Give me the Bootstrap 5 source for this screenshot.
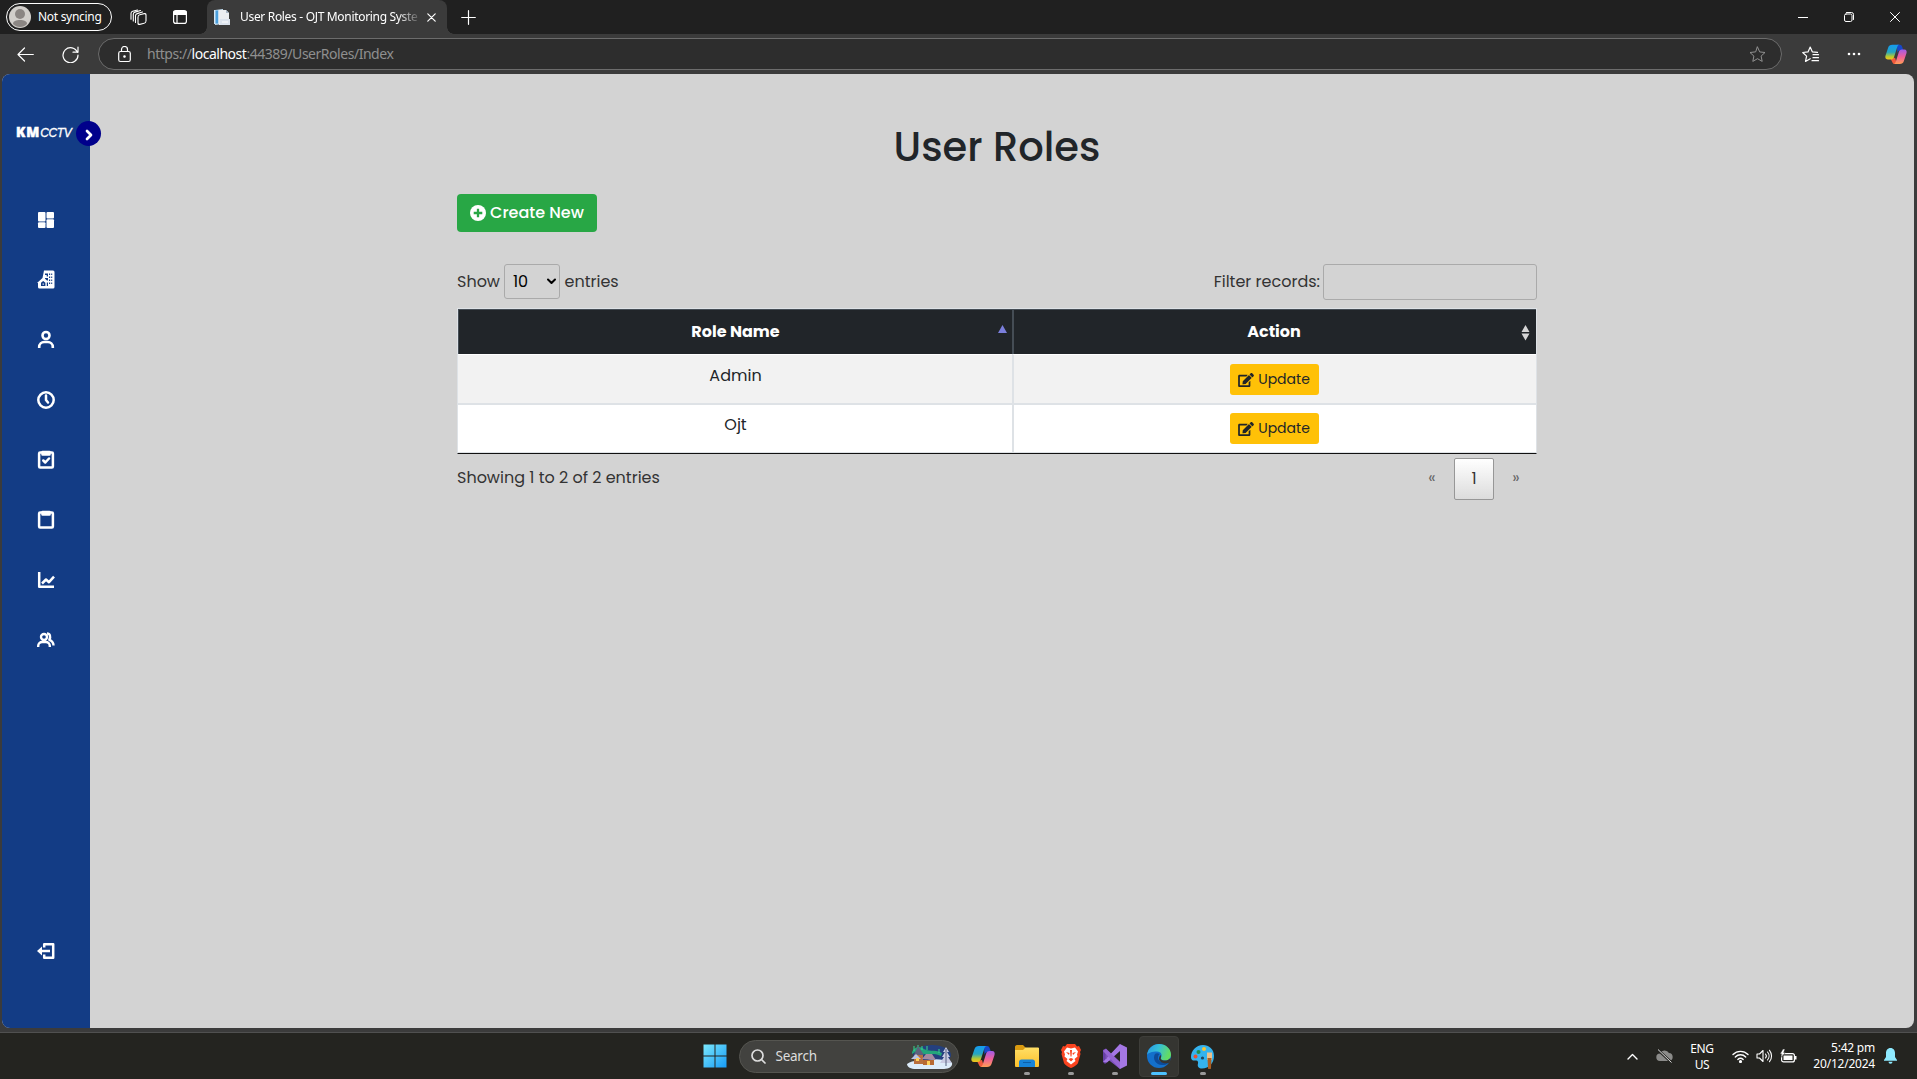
<!DOCTYPE html>
<html lang="en">
<head>
<meta charset="utf-8">
<title>User Roles - OJT Monitoring System</title>
<link href="https://cdn.jsdelivr.net/npm/bootstrap@5.3.0/dist/css/bootstrap.min.css" rel="stylesheet">
<style>
html,body{height:100%;overflow:hidden}
body{background:#3b3b3b;font-family:"Noto Sans","Open Sans",sans-serif;font-size:12px;line-height:1.2;color:#fff}
svg{display:block;flex:none}
a{text-decoration:none}
.ln{fill:none;stroke:currentColor;stroke-linecap:round;stroke-linejoin:round}
.tabstrip{height:34px;background:#202020;padding-left:6px}
.profile{width:106px;height:28px;border:1.4px solid #fff;border-radius:14px;padding-left:2px;gap:7px;letter-spacing:-.3px}
.tab-open{width:240px;height:34px;background:#3b3b3b;border-radius:8px 8px 0 0;margin-left:20px;padding:0 11px 0 7px;position:relative}
.tab-open::before,.tab-open::after{content:"";position:absolute;bottom:0;width:7px;height:7px}
.tab-open::before{left:-7px;background:radial-gradient(circle at 0 0,#202020 6.5px,#3b3b3b 7px)}
.tab-open::after{right:-7px;background:radial-gradient(circle at 100% 0,#202020 6.5px,#3b3b3b 7px)}
.tab-title{width:184px;margin-left:10px;white-space:nowrap;letter-spacing:-.32px;-webkit-mask-image:linear-gradient(90deg,#000 158px,transparent 182px)}
.toolbar{height:40px;padding-left:17px}
.address{width:1684px;height:32px;margin-left:19px;border:1px solid #6c6c6c;border-radius:16px;background:#2d2d2d;padding:0 15px 0 17px}
.url{font-size:14px;color:#8f8f8f;margin-left:16px;letter-spacing:-.47px}
.page{width:1912px;height:954px;margin-left:2px;border-radius:8px;overflow:hidden;background:#d3d3d3;font-family:Poppins,Inter,sans-serif;font-size:16px;line-height:1.5;color:#212529}
.side{width:88px;background:#133c85;color:#fff;position:relative;padding-top:44px}
.brand{height:28px;font-family:"Liberation Sans",sans-serif;line-height:28px;padding-left:14px;white-space:nowrap}
.brand b{font-family:"Open Sans",sans-serif;font-weight:800;font-size:13.5px;letter-spacing:.9px;-webkit-text-stroke:.5px #fff}
.brand i{font-size:12px;letter-spacing:-.35px;-webkit-text-stroke:.3px #fff}
.toggler{position:absolute;left:74px;top:47px;width:25px;height:25px;border-radius:50%;background:#00008b}
.side-nav{margin-top:43px}
.side-nav a{height:60px;color:#fff}
.side-nav svg[height="18"],.side-nav svg[height="16"],.side-out svg{margin-top:1px}
.side-out{margin-top:250px;height:62px}
.content-box{width:1080px;margin-left:367px}
.content-box h1{font-size:40px;font-weight:500;line-height:48px;margin:49px 0 23px}
.btn-new{height:38px;width:140px;background:#28a745;border-radius:4px;color:#fff;font-weight:500;gap:4px}
.controls{margin-top:32px;height:36px;color:#333}
.len{width:56px;height:35px;border:1px solid #aaa;border-radius:3px;color:#000;margin:0 4.500px 1px 4px;padding:0 3px 0 8px}
.filter{width:214px;height:36px;border:1px solid #aaa;border-radius:3px;background:transparent;margin-left:3px}
.roles{margin:8px 0 0;width:1080px;border-collapse:separate;border-spacing:0;border:1px solid #dee2e6;border-bottom:1px solid #111;table-layout:fixed;text-align:center}
.roles th{background:#212529;color:#fff;height:45px;padding:0;border-top:1px solid #454d55;border-left:1px solid #454d55;font-weight:700;position:relative;vertical-align:middle;line-height:24px}
.roles th+th{border-left-width:2px;padding-right:2px}
.roles th svg{position:absolute}
.roles td{height:49px;padding:8px 0 0 1px;border-top:2px solid #dee2e6;vertical-align:top;background:#fff}
.roles td+td{border-left:2px solid #dee2e6;padding-left:0;padding-right:2px}
.roles tr:first-child td{background:#f2f2f2;border-top:1px solid #fff;padding-top:9px}
.roles tr:last-child td{height:50px;border-bottom:1px solid #dee2e6}
.btn-up{width:89px;height:31px;background:#ffc107;border-radius:3px;font-size:14px;color:#212529;gap:4px;vertical-align:top}
.foot{color:#333;height:48px}
.pg{width:40px;height:42px;border:1px solid #979797;border-radius:2px;background:linear-gradient(#fff,#dcdcdc);margin:1px 19px 0}
.lr{font-size:16px;color:#666;width:6px;display:flex;justify-content:center}
.edge{height:5px;border-bottom:1px solid #505050}
.taskbar{height:46px;background:#242420;position:relative}
.slot{width:44px;height:46px;position:relative}
.slot.run::after{content:"";position:absolute;bottom:4px;left:19px;width:6px;height:3px;border-radius:2px;background:#999}
.slot.live::before{content:"";position:absolute;left:2px;top:3px;width:40px;height:41px;border-radius:4px;background:#353531;border:1px solid #3d3d39}
.slot.live::after{left:14px;width:16px;background:#4cc2ff}
.slot svg{position:relative}
.searchbox{width:220px;height:33px;border-radius:17px;background:#42423f;border:1px solid #555550;padding:0 5px 0 11px;margin:0 2px;color:#ddd;font-size:13.5px}
.tray{position:absolute;right:20px;top:0;height:46px;font-size:12px;line-height:16px}
</style>
<script src="https://cdn.jsdelivr.net/npm/bootstrap@5.3.0/dist/js/bootstrap.bundle.min.js"></script>
</head>
<body>
<svg width="0" height="0" class="position-absolute">
<defs>
<linearGradient id="cb" x1="0" y1="0" x2="0" y2="1"><stop offset="0" stop-color="#159bf0"/><stop offset=".5" stop-color="#25a6c0"/><stop offset=".8" stop-color="#b8c92f"/><stop offset="1" stop-color="#f6c21c"/></linearGradient>
<linearGradient id="cp" x1="0" y1="0" x2="0" y2="1"><stop offset="0" stop-color="#a05be8"/><stop offset=".5" stop-color="#ef609a"/><stop offset="1" stop-color="#ff9d54"/></linearGradient>
<linearGradient id="wn" x1="0" y1="0" x2="1" y2="1"><stop offset="0" stop-color="#7be8fc"/><stop offset="1" stop-color="#169bf7"/></linearGradient>
<linearGradient id="fo" x1="0" y1="0" x2="0" y2="1"><stop offset="0" stop-color="#ffdf66"/><stop offset="1" stop-color="#fbbf2a"/></linearGradient>
<linearGradient id="eg" x1="0" y1="0" x2="1" y2=".3"><stop offset="0" stop-color="#2794e6"/><stop offset=".5" stop-color="#35bfd8"/><stop offset="1" stop-color="#63dc63"/></linearGradient>
<symbol id="copilot" viewBox="0 0 24 24">
<path d="M13 2h3c2 0 2.500 1.500 3 3l1 3h-3c-2 0-3 1-3.500 3z" fill="#1747c9"/>
<path d="M6 17l2 4c.5 1.500 1.500 2 3 2h2l-2-7z" fill="#f25a3d"/>
<path d="M8 2h8c-2 0-2.500 2-3 3.500L10 15c-.6 2-1.500 3-3.500 3H3c-2.500 0-3-2-2.500-4L3.500 5C4.200 3 5.500 2 8 2z" fill="url(#cb)"/>
<path d="M16 23H9c2 0 2.500-2 3-3.500L15 10c.6-2 1.500-3 3.500-3H21c2.500 0 3 2 2.500 4l-3 9c-.7 2-2 3-4.500 3z" fill="url(#cp)"/>
</symbol>
<symbol id="pen" viewBox="0 0 576 512"><path fill="currentColor" d="M402.600 83.200l90.200 90.200c3.800 3.800 3.800 10 0 13.800L274.400 405.600l-92.800 10.300c-12.400 1.400-22.900-9.100-21.500-21.500l10.300-92.800L388.800 83.200c3.800-3.800 10-3.800 13.800 0zm162-22.900l-48.800-48.800c-15.200-15.200-39.900-15.200-55.200 0l-35.400 35.400c-3.800 3.800-3.800 10 0 13.800l90.200 90.200c3.800 3.800 10 3.800 13.800 0l35.400-35.400c15.200-15.300 15.200-40 0-55.200zM384 346.200V448H64V128h229.800c3.200 0 6.200-1.300 8.500-3.500l40-40c7.600-7.600 2.200-20.500-8.500-20.500H48C21.500 64 0 85.500 0 112v352c0 26.500 21.500 48 48 48h352c26.500 0 48-21.500 48-48V306.200c0-10.700-12.900-16-20.500-8.500l-40 40c-2.200 2.300-3.500 5.300-3.500 8.500z"/></symbol>
</defs></svg>

<header class="tabstrip d-flex align-items-center">
  <div class="profile d-flex align-items-center"><svg width="22" height="22" viewBox="0 0 22 22"><circle cx="11" cy="11" r="11" fill="#d2cfcb"/><circle cx="11" cy="8" r="5" fill="#8b8683"/><path d="M4 18c0-3 3-4 7-4s7 1 7 4c-2 2-4 3-7 3s-5-1-7-3z" fill="#8b8683"/></svg><span>Not syncing</span></div>
  <svg class="ln" style="margin-left:18px" width="17" height="17" viewBox="0 0 17 17" stroke-width="1.100"><rect x="8" y="5.200" width="8" height="9.600" rx="1.800" transform="skewY(-14) translate(0 3)"/><path d="M5.500 13.500V6.800c0-1.200.6-1.900 1.700-2.200L12.500 3M3.300 12V5.300c0-1.200.6-1.900 1.700-2.200L10.500 1.500M1 10.200V4.400c0-1.200.6-1.900 1.700-2.200L7.500 1"/></svg>
  <svg class="ln" style="margin-left:26px" width="14" height="14" viewBox="0 0 14 14" stroke-width="1.200"><rect x=".6" y=".6" width="12.800" height="12.800" rx="2.200"/><path d="M1 1.500h12v3H1z" fill="#fff"/><path d="M4 4v9"/></svg>
  <div class="tab-open d-flex align-items-center">
    <svg width="16" height="17" viewBox="0 0 16 17"><path d="M1 1l8-1v15l-8 1z" fill="#c3def1"/><path d="M0 1h1.500v14H0z" fill="#d5e6f2"/><path d="M1.500 1.500h2.500v13H1.500z" fill="#4b9fdc"/><path d="M5 1h7l3 3v12H5z" fill="#eceef1"/><path d="M12 1l3 3h-3z" fill="#aab8c7"/><path d="M6 10h10v6H6z" fill="#dce3ed"/><path d="M8 13h6" stroke="#fff"/></svg>
    <div class="tab-title">User Roles - OJT Monitoring Syste</div>
    <svg class="ln ms-auto" width="9" height="9" viewBox="0 0 9 9" stroke-width="1.200"><path d="M.8.8l7.400 7.400M8.200.8L.8 8.200"/></svg>
  </div>
  <svg class="ln" style="margin-left:14px" width="15" height="15" viewBox="0 0 15 15" stroke-width="1.200"><path d="M7.500.7v13.600M.7 7.500h13.600"/></svg>
  <div class="ms-auto d-flex align-items-center" style="gap:36px;padding-right:17px">
    <svg width="10" height="10"><path d="M0 5.500h10" stroke="#fff"/></svg>
    <svg class="ln" width="10" height="10" viewBox="0 0 10 10"><rect x=".5" y="2" width="7.500" height="7.500" rx="1.500"/><path d="M2.500.5h5a2 2 0 0 1 2 2v5"/></svg>
    <svg class="ln" width="10" height="10" viewBox="0 0 10 10"><path d="M.5.5l9 9M9.500.5l-9 9"/></svg>
  </div>
</header>
<div class="toolbar d-flex align-items-center">
  <svg class="ln" width="17" height="15" viewBox="0 0 17 15" stroke-width="1.200"><path d="M16.300 7.500H1M7.500 1L1 7.500 7.500 14"/></svg>
  <svg class="ln" style="margin-left:28px" width="17" height="17" viewBox="0 0 17 17" stroke-width="1.200"><path d="M15.500 6.500A7.500 7.500 0 1 0 16 9M16 1v5.200h-5"/></svg>
  <div class="address d-flex align-items-center">
    <svg class="ln" style="margin-left:2px" width="13" height="17" viewBox="0 0 13 17" stroke-width="1.200"><rect x=".7" y="5.500" width="11.600" height="10" rx="1.800"/><path d="M3.500 5.500V3.500a3 3 0 0 1 6 0v2"/><circle cx="6.500" cy="10.500" r=".7" fill="#fff"/></svg>
    <div class="url">https://<span class="text-white">localhost</span>:44389/UserRoles/Index</div>
    <svg class="ln ms-auto" width="17" height="17" viewBox="0 0 17 17" style="color:#919191"><path d="M8.500 1l2.200 4.900 5.300.6-3.900 3.600 1.100 5.300-4.700-2.700-4.700 2.700 1.100-5.300L1 6.500l5.300-.6z"/></svg>
  </div>
  <svg class="ln" style="margin-left:20px" width="18" height="17" viewBox="0 0 18 17" stroke-width="1.200"><path d="M15.500 6.400L10.300 5.800 8.200 1 6 5.900l-5.300.6 3.900 3.600-1.100 5.300 4.700-2.700M11 8.700h5.500M11 11.700h5.500M10 14.700h6.500"/></svg>
  <svg style="margin-left:27px" width="14" height="4"><g fill="#fff"><circle cx="2" cy="2" r="1.300"/><circle cx="7" cy="2" r="1.300"/><circle cx="12" cy="2" r="1.300"/></g></svg>
  <svg style="margin-left:24px" width="22" height="22"><use href="#copilot"/></svg>
</div>

<div class="page d-flex">
  <aside class="side d-flex flex-column">
    <div class="brand"><b>KM</b><i>CCTV</i></div>
    <div class="toggler d-flex align-items-center justify-content-center"><svg class="ln" style="margin-top:3px" width="8" height="12" viewBox="0 0 8 12" stroke-width="2.700"><path d="M2 2L6 6 2 10"/></svg></div>
    <nav class="side-nav d-flex flex-column">
      <a class="d-flex align-items-center justify-content-center"><svg width="18" height="18" viewBox="0 0 18 18" fill="#fff"><rect x="1" y="1" width="7.500" height="9.500" rx="1"/><rect x="1" y="11.300" width="7.500" height="5.700" rx="1"/><rect x="9.500" y="1" width="7.500" height="6.500" rx="1"/><rect x="9.500" y="8.300" width="7.500" height="8.700" rx="1"/></svg></a>
      <a class="d-flex align-items-center justify-content-center"><svg width="18" height="19" viewBox="0 0 18 19"><path d="M7 .5h9a1.500 1.500 0 0 1 1.500 1.500v15a1.500 1.500 0 0 1-1.500 1.500H2.500A1.500 1.500 0 0 1 1 17v-4H0l5.500-5z" fill="#fff"/><path d="M4 12.800l2.200-1.800 2.200 1.800V16H4zM8 3.500h3v3H9.700V5H8zM8 8h3v2.500h-1L8 8.800zM12 3.500h1.200V5H12zm0 3h1.200V8H12zm0 3h1.200V11H12zm-2.200 3H11V16H9.800zM12 12.500h1.200V14H12zM14.200 3.500h1V5h-1zm0 3h1V8h-1zm0 3h1V11h-1zm0 3h1V14h-1z" fill="#133c85"/><path d="M5.600 13.500h1.200v1.200H5.600z" fill="#fff"/></svg></a>
      <a class="d-flex align-items-center justify-content-center"><svg class="ln" width="18" height="19" viewBox="0 0 18 19" stroke-width="2.600" style="stroke-linecap:butt"><circle cx="9" cy="5.500" r="3.500"/><path d="M2.200 18v-1c0-3 2.300-5 5-5h3.600c2.700 0 5 2 5 5v1"/></svg></a>
      <a class="d-flex align-items-center justify-content-center"><svg class="ln" width="18" height="18" viewBox="0 0 18 18" stroke-width="2.500"><circle cx="9" cy="9" r="7.700"/><path d="M9 4.500V9l2 2.500"/></svg></a>
      <a class="d-flex align-items-center justify-content-center"><svg class="ln" width="18" height="19" viewBox="0 0 18 19" stroke-width="2.500"><rect x="2.100" y="2.500" width="13.800" height="15" rx="1"/><path d="M5.500 2h7v2.500h-7zM6.300 10.500l2 2 3.700-4"/></svg></a>
      <a class="d-flex align-items-center justify-content-center"><svg class="ln" width="18" height="19" viewBox="0 0 18 19" stroke-width="2.500"><rect x="2.100" y="2.500" width="13.800" height="15" rx="1"/><path d="M5.500 2h7v2.500h-7z"/></svg></a>
      <a class="d-flex align-items-center justify-content-center"><svg class="ln" width="18" height="18" viewBox="0 0 18 18" stroke-width="2.500" style="stroke-linecap:butt"><path d="M2.200 1v14.700H17M5 12.500l4-4 3 2.700 5-5.500"/></svg></a>
      <a class="d-flex align-items-center justify-content-center"><svg class="ln" width="18" height="16" viewBox="0 0 18 16" stroke-width="2.400" style="stroke-linecap:butt"><circle cx="7" cy="5" r="3"/><path d="M1.200 15v-1c0-2.500 1.800-4 4-4h3.600c2.200 0 4 1.500 4 4v1M10 1.500c3 0 4 3 2.300 6.300 2.700 1 4.200 2.500 4.200 5.700"/></svg></a>
    </nav>
    <div class="side-out d-flex align-items-center justify-content-center"><svg class="ln" width="18" height="18" viewBox="0 0 18 18" stroke-width="2.500" style="stroke-linecap:butt"><path d="M7.200 5.500V2.200h9v13.600h-9v-3.300M4 9h9"/><path d="M0 9l5-4.500v9z" fill="#fff" stroke="none"/></svg></div>
  </aside>
  <main class="content-box">
    <h1 class="text-center">User Roles</h1>
    <a class="btn-new d-flex align-items-center justify-content-center"><svg width="16" height="16" viewBox="0 0 16 16"><circle cx="8" cy="8" r="8" fill="#fff"/><path d="M8 3.700v8.600M3.700 8h8.600" stroke="#28a745" stroke-width="2.300"/></svg><span>Create New</span></a>
    <div class="controls d-flex align-items-center">
      <span>Show</span>
      <div class="len d-flex align-items-center justify-content-between"><span>10</span><svg class="ln" width="9" height="7" viewBox="0 0 9 7" stroke-width="2"><path d="M1 1.500l3.500 3.500L8 1.500"/></svg></div>
      <span>entries</span>
      <span class="ms-auto filter-label">Filter records:</span><input class="filter" aria-label="Filter records">
    </div>
    <table class="roles">
      <colgroup><col style="width:554px"><col></colgroup>
      <thead><tr><th>Role Name<svg style="right:5px;top:15px" width="9" height="8"><path d="M0 8l4.500-8L9 8z" fill="#7b7fdc"/></svg></th><th>Action<svg style="right:6px;top:15px" width="9" height="16"><path d="M.5 7L4.500 0l4 7zM.5 8.500h8l-4 7z" fill="#d5d5d5"/></svg></th></tr></thead>
      <tbody>
        <tr><td>Admin</td><td><a class="btn-up d-inline-flex align-items-center justify-content-center"><svg width="16" height="14"><use href="#pen"/></svg><span>Update</span></a></td></tr>
        <tr><td>Ojt</td><td><a class="btn-up d-inline-flex align-items-center justify-content-center"><svg width="16" height="14"><use href="#pen"/></svg><span>Update</span></a></td></tr>
      </tbody>
    </table>
    <div class="foot d-flex align-items-center">
      <span class="info">Showing 1 to 2 of 2 entries</span>
      <div class="ms-auto d-flex align-items-center" style="padding-right:18px"><span class="lr">«</span><div class="pg d-flex align-items-center justify-content-center">1</div><span class="lr">»</span></div>
    </div>
  </main>
</div>
<div class="edge"></div>
<footer class="taskbar d-flex align-items-center justify-content-center">
  <div class="slot d-flex align-items-center justify-content-center"><svg width="24" height="24" viewBox="0 0 24 24" fill="url(#wn)"><path d="M.5.5h11v11H.5zM12.500.5h11v11h-11zM.5 12.500h11v11H.5zM12.500 12.500h11v11h-11z"/></svg></div>
  <div class="searchbox d-flex align-items-center">
    <svg class="ln" width="15" height="15" viewBox="0 0 15 15" stroke-width="1.700"><circle cx="6.500" cy="6.500" r="5.500"/><path d="M10.500 10.500L14 14"/></svg>
    <span style="margin-left:10px;letter-spacing:-.25px">Search</span>
    <svg class="ms-auto" width="46" height="25" viewBox="0 0 46 25"><ellipse cx="25" cy="11" rx="19" ry="10" fill="#24407f"/><path d="M5 8c3-6 8-6 12-3s10 0 18 4l-1 3c-9-4-15 0-20-3S9 8 5 10z" fill="#24a57a"/><path d="M7 2v5M11 1v5M15 2v4M20 2v4M32 5v4" stroke="#37d68e"/><path d="M0 20c5-4 10-3 16-3 9-2 18-3 29 2 1 3-3 6-8 6H9c-5 0-9-2-9-5z" fill="#dcecfa"/><path d="M11 2l6 9H7z" fill="#5f617c"/><path d="M7 11h9v9H7z" fill="#b86f3e"/><path d="M4 15l5-5 5 5z" fill="#b9c4e4"/><path d="M15 15l4-5h6l4 6z" fill="#a78ba0"/><path d="M16 16h11v5H16z" fill="#b76a34"/><path d="M20 17h3v4h-3zM9 14h3v3H9z" fill="#ffd15b"/><path d="M39 3l3 5h-2l3 5h-2l4 6H33l4-6h-2l3-5h-2z" fill="#c8cbe2"/><path d="M39 5v17" stroke="#54607e"/></svg>
  </div>
  <div class="slot d-flex align-items-center justify-content-center"><svg width="24" height="24"><use href="#copilot"/></svg></div>
  <div class="slot run d-flex align-items-center justify-content-center"><svg width="24" height="24" viewBox="0 0 24 24"><path d="M0 3c0-1 .6-2 2-2h6l3 3H24v8H0z" fill="#d99a10"/><path d="M0 6h8l2.500-2.500H23a1 1 0 0 1 1 1V22a1 1 0 0 1-1 1H1a1 1 0 0 1-1-1z" fill="url(#fo)"/><path d="M4 23v-5c0-1.500 1-2.500 2.500-2.500h11c1.500 0 2.500 1 2.500 2.500v5z" fill="#1683d8"/><path d="M8 18.500h8" stroke="#0c5fa8"/></svg></div>
  <div class="slot run d-flex align-items-center justify-content-center"><svg width="20" height="24" viewBox="0 0 20 24"><path d="M6 0h8l2 2.500 2-.5 2 4-1 2 .5 2L17 19c-.8 2-5 4.500-7 5-2-.5-6.200-3-7-5L.5 10 1 8 0 6l2-4 2 .5z" fill="#fb4420"/><path d="M10 4.500l4-1 3 4-1 3 .5 2-3 2.500 1 2-4.500 3.500L5.500 17l1-2-3-2.500.5-2-1-3 3-4z" fill="#fff"/><path d="M5 8l3.500 1L8 11zM15 8l-3.500 1 .5 2zM9 6h2l-.5 6.500h-1zM7.500 15l2.500-1 2.500 1-2.500 2.500z" fill="#fb4420"/></svg></div>
  <div class="slot run d-flex align-items-center justify-content-center"><svg width="24" height="25" viewBox="0 0 24 25"><path d="M0 6l3-1.500L20 21l-3 4L3 14v4l-3-1z" fill="#7d51bb"/><path d="M0 18l2 2 15-14V0L2.500 16.500V6L0 7z" fill="#6640a5"/><path d="M17 0l7 3.500v18L17 25V7L4 18.500 0 18z" fill="#a477e4"/><path d="M3 5l14 13v7L0 7z" fill="#9565d2"/></svg></div>
  <div class="slot run live d-flex align-items-center justify-content-center"><svg width="24" height="24" viewBox="0 0 24 24"><circle cx="12" cy="12" r="12" fill="#1370cb"/><path d="M0 11C1 4 6 0 12 0c7 0 12 5 12 10.500 0 4-3 6-6 6-3.500 0-5-1.500-4-3 1.500-2 .5-6-4-6C5 7.500 1 9 0 11z" fill="url(#eg)"/><path d="M8 10c-3 5 1 12 9 11 2 0 4-1.500 5-3-2 1-4 1-6 .5-5-1-6.500-5-3.500-8.500C11 9 9 9 8 10z" fill="#0d4b99"/><path d="M14 13.500c-1 1.500.5 3 4 3 1.500 0 4-.5 5.500-2.500.4 2-1 5-2 5-4 1-9-.5-9.500-4 0-1.500.5-3 2-4z" fill="#353531"/></svg></div>
  <div class="slot run d-flex align-items-center justify-content-center"><svg width="24" height="25" viewBox="0 0 24 25"><path d="M12 1C5 1 0 7 0 13c0 3 2 4 4.500 3.500 2-.5 3 1 2.500 3C6 23 8 24.500 11 24.500 18 24.500 23 19 23 12 23 5 18 1 12 1z" fill="#35b3ee"/><circle cx="7.500" cy="8" r="2" fill="#228e4b"/><circle cx="13" cy="5" r="2" fill="#f4c534"/><circle cx="4.500" cy="12.500" r="2" fill="#e65132"/><circle cx="11.500" cy="14" r="1.600" fill="#24445c"/><path d="M16 9l1-1 1 1 1-1 1 1 1-1v8h-5z" fill="#ecc18d"/><path d="M16.500 14h4l-.5 10a1.500 1.500 0 0 1-3 0z" fill="#a95d22"/></svg></div>
  <div class="tray d-flex align-items-center">
    <svg class="ln" width="11" height="7" viewBox="0 0 11 7" stroke-width="1.400"><path d="M1 6l4.500-4.500L10 6"/></svg>
    <svg style="margin-left:18px" width="17" height="14" viewBox="0 0 17 14"><path d="M4 12a3.700 3.700 0 0 1 0-7.400 5 5 0 0 1 9-.5 4 4 0 0 1 .5 7.900z" fill="#8b8b89"/><path d="M2 1l13.500 12.500" stroke="#242420" stroke-width="2.400"/><path d="M2 .5l13.500 13" stroke="#ddd"/></svg>
    <div class="text-center" style="margin:1px 0 0 17px;width:24px;letter-spacing:-.4px">ENG<br>US</div>
    <svg class="ln" style="margin-left:18px" width="17" height="13" viewBox="0 0 17 13" stroke-width="1.400"><path d="M1 4.500a10.500 10.500 0 0 1 15 0M3.300 7a7.300 7.300 0 0 1 10.400 0M5.800 9.400a4 4 0 0 1 5.400 0"/><circle cx="8.500" cy="11.500" r=".9" fill="#fff"/></svg>
    <svg class="ln" style="margin-left:7px" width="17" height="14" viewBox="0 0 17 14" stroke-width="1.100"><path d="M1 5h2.500L7 1.500v11L3.500 9H1zM9.500 5a3 3 0 0 1 0 4M11.500 3a6 6 0 0 1 0 8M13.500 1.300a9 9 0 0 1 0 11.400"/></svg>
    <svg style="margin-left:7px" width="17" height="15" viewBox="0 0 17 15"><rect x="1.600" y="4.600" width="12.800" height="8.300" rx="2" fill="none" stroke="#fff" stroke-width="1.200"/><path d="M3.500 6.500h9V11h-9zM15 7h1.500v3.500H15z" fill="#fff"/><path d="M3 0L0 5h2L1 8.500 5.500 3.500H3.700L5 0z" fill="#fff" stroke="#242420" stroke-width=".5"/></svg>
    <div class="text-end clock" style="margin-left:14px;width:64px;white-space:nowrap;letter-spacing:-.22px">5:42 pm<br>20/12/2024</div>
    <svg style="margin-left:9px" width="13" height="16" viewBox="0 0 13 16"><path d="M6.500 0C3.500 0 2 2.500 2 5v4L0 12v.8h13V12l-2-3V5c0-2.500-1.500-5-4.500-5zM4.500 13.700h4a2 2 0 0 1-4 0z" fill="#8eeaff"/></svg>
  </div>
</footer>
</body>
</html>
